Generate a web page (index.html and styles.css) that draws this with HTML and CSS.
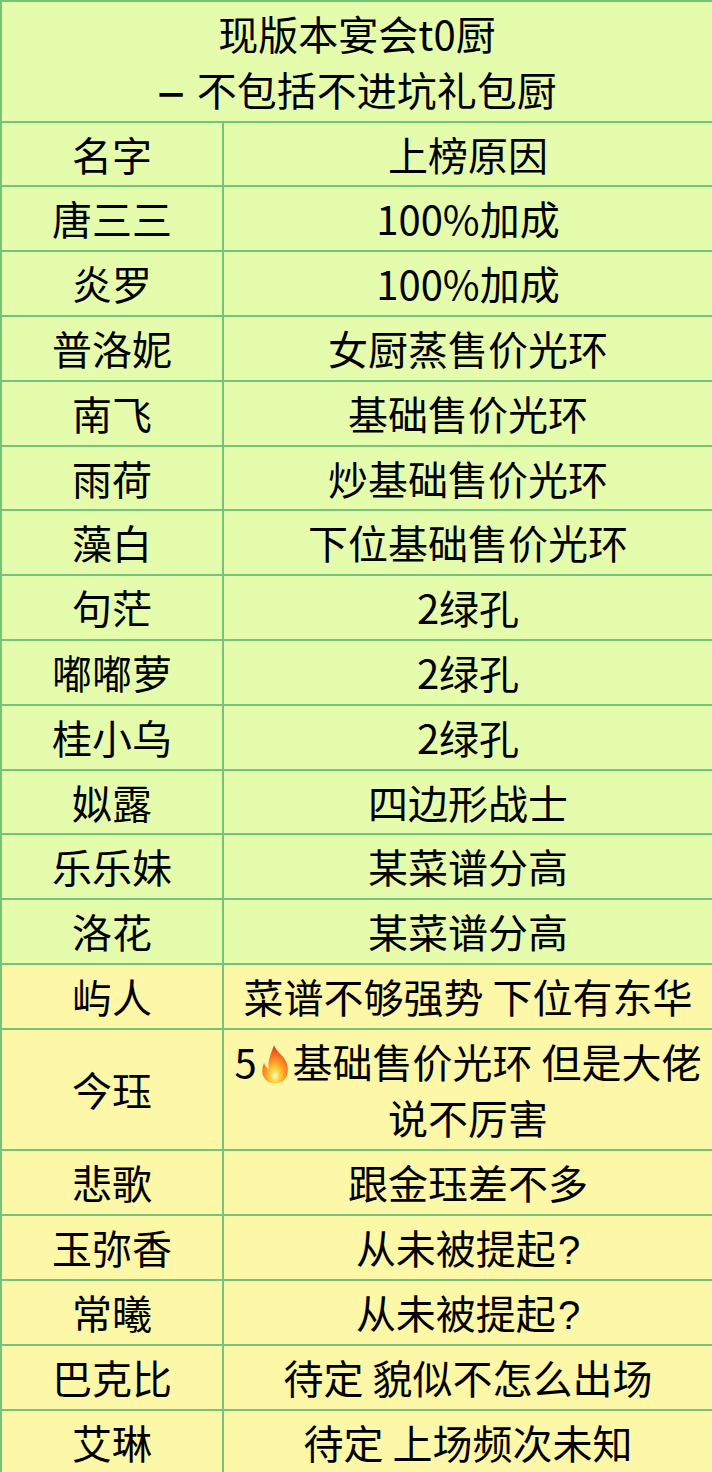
FILE: index.html
```html
<!DOCTYPE html>
<html lang="zh-CN">
<head>
<meta charset="utf-8">
<title>现版本宴会t0厨</title>
<link rel="stylesheet" href="styles.css">
</head>
<body>
<table class="t0">
  <colgroup><col class="c-name"><col class="c-why"></colgroup>
  <tr class="lime"><td class="title" colspan="2">现版本宴会t0厨<br><span class="dash">—</span> 不包括不进坑礼包厨</td></tr>
  <tr class="lime"><td>名字</td><td>上榜原因</td></tr>
  <tr class="lime"><td>唐三三</td><td>100%加成</td></tr>
  <tr class="lime"><td>炎罗</td><td>100%加成</td></tr>
  <tr class="lime"><td>普洛妮</td><td>女厨蒸售价光环</td></tr>
  <tr class="lime"><td>南飞</td><td>基础售价光环</td></tr>
  <tr class="lime"><td>雨荷</td><td>炒基础售价光环</td></tr>
  <tr class="lime"><td>藻白</td><td>下位基础售价光环</td></tr>
  <tr class="lime"><td>句茫</td><td>2绿孔</td></tr>
  <tr class="lime"><td>嘟嘟萝</td><td>2绿孔</td></tr>
  <tr class="lime"><td>桂小乌</td><td>2绿孔</td></tr>
  <tr class="lime"><td>姒露</td><td>四边形战士</td></tr>
  <tr class="lime"><td>乐乐妹</td><td>某菜谱分高</td></tr>
  <tr class="lime"><td>洛花</td><td>某菜谱分高</td></tr>
  <tr class="yellow"><td>屿人</td><td>菜谱不够强势 下位有东华</td></tr>
  <tr class="yellow"><td>今珏</td><td class="wrap">5<svg class="fire" viewBox="0 0 32 40" aria-label="🔥"><defs><radialGradient id="fg" cx="0.5" cy="0.8" r="0.72"><stop offset="0" stop-color="#fffbe8"/><stop offset="0.22" stop-color="#ffd83f"/><stop offset="0.55" stop-color="#ff9422"/><stop offset="1" stop-color="#e5421b"/></radialGradient></defs><path d="M15 1 C17 8 26 12 28 20 C30 28 28 34 24 37 C20 40 11 40 8 37 C3 33 2 26 5 19 C6 22 8 24 10 25 C8 17 12 10 15 1 Z" fill="url(#fg)"/></svg>基础售价光环 但是大佬说不厉害</td></tr>
  <tr class="yellow"><td>悲歌</td><td>跟金珏差不多</td></tr>
  <tr class="yellow"><td>玉弥香</td><td>从未被提起<span class="q">?</span></td></tr>
  <tr class="yellow"><td>常曦</td><td>从未被提起<span class="q">?</span></td></tr>
  <tr class="yellow"><td>巴克比</td><td>待定 貌似不怎么出场</td></tr>
  <tr class="yellow"><td>艾琳</td><td>待定 上场频次未知</td></tr>
</table>
</body>
</html>
```

FILE: styles.css
```css
html, body {
  margin: 0;
  padding: 0;
  background: #fdf6a8;
}
body {
  width: 712px;
  overflow: hidden;
  font-family: "Noto Sans CJK SC", "Noto Sans", sans-serif;
  color: #000;
}
.t0 {
  border-collapse: collapse;
  width: 714px;
  table-layout: fixed;
}
.c-name { width: 222px; }
.t0 td {
  border: 2px solid #74c47a;
  font-size: 40px;
  line-height: 55.8px;
  padding: 4px 4px 3px;
  text-align: center;
  vertical-align: middle;
  white-space: nowrap;
}
.t0 td.wrap {
  white-space: normal;
  padding: 4px 0 4px;
}
.t0 td.title {
  padding: 4px 4px 3px;
}
.lime td { background: #e6fcad; }
.yellow td { background: #fdf7a8; }
.dash {
  display: inline-block;
  line-height: 0;
  font-weight: 700;
  transform: scaleX(0.72);
  margin: 0 -2px 0 -4px;
}
.q {
  font-family: "Liberation Sans", sans-serif;
  line-height: 0;
  margin-left: 2px;
}
.fire {
  display: inline-block;
  width: 34px;
  height: 40px;
  vertical-align: -6px;
  margin: 0 1px;
}
```
